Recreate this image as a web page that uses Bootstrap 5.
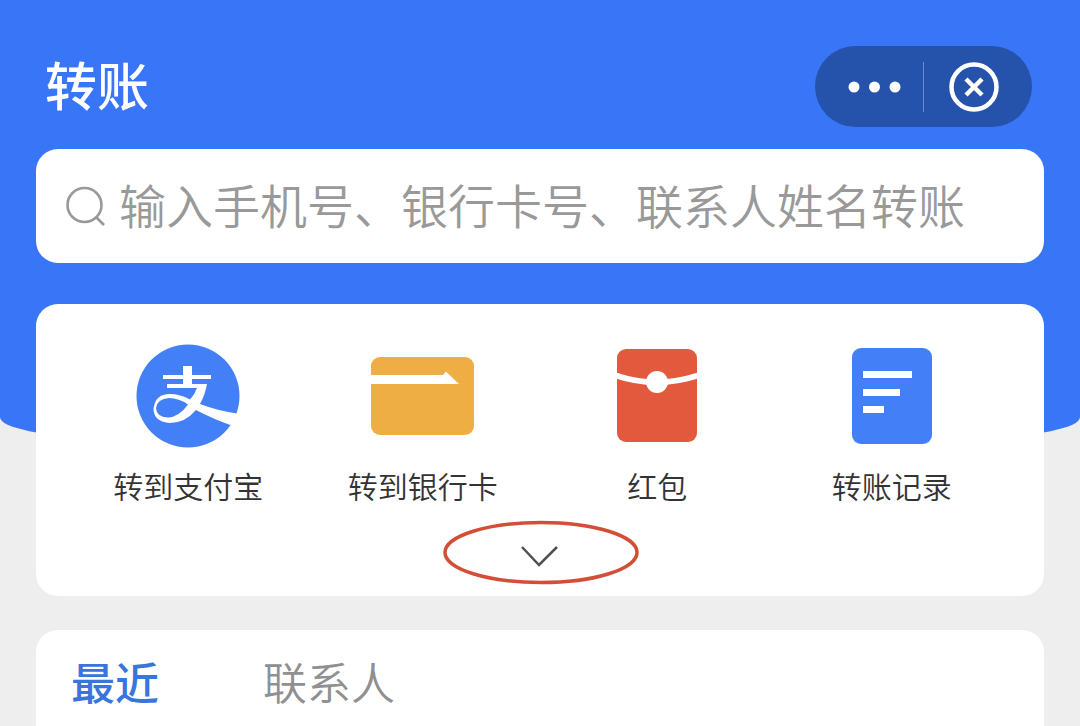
<!DOCTYPE html>
<html lang="zh-CN">
<head>
<meta charset="utf-8">
<meta name="viewport" content="width=device-width, initial-scale=1">
<title>转账</title>
<link href="https://cdn.jsdelivr.net/npm/bootstrap@5.3.0/dist/css/bootstrap.min.css" rel="stylesheet">
<style>
  body { background: #eee; font-family: "Noto Sans CJK SC", sans-serif; }
  .hero { background: #3875f7; padding: 46px 36px 174px; border-radius: 0 0 100px 100px / 0 0 20px 20px; }
  .page-title { font-size: 52px; line-height: 76px; font-weight: 500; padding-left: 9px; }
  .capsule { background: #2552ab; height: 81px; width: 217px; margin-right: 12px; }
  .capsule .btn { border: 0; padding: 0; flex: 1 1 0; }
  .capsule .btn svg { display: block; margin: 0 auto; }
  .capsule-rule { width: 1px; height: 50px; background: #6b8cd0; }
  .search-box { height: 114px; margin-top: 22px; border-radius: 22px; padding: 0 28px; gap: 11px; }
  .search-box input { font-size: 47px; line-height: 70px; font-weight: 350; color: #333; padding: 0 0 4px; background: none; }
  .search-box input::placeholder { color: #999; opacity: 1; }
  .panel { border-radius: 22px; margin: 0 36px; }
  .actions { margin-top: -133px; padding: 40px 35px 10px; }
  .action-link { color: #333; font-size: 30px; line-height: 44px; gap: 15px; font-weight: 350; }
  .expand { border: 0; padding: 0; margin-top: 13px; }
  .expand svg { display: block; }
  .tab-panel { margin-top: 34px; border-radius: 22px 22px 0 0; padding: 19px 35px 0; gap: 104px; }
  .tab-panel .btn { border: 0; padding: 0; font-size: 44px; line-height: 64px; font-weight: 350; color: #909090; }
  .tab-panel .btn.active { font-weight: 500; color: #3c74de; }
</style>
</head>
<body class="d-flex flex-column min-vh-100">
<header class="hero">
  <div class="d-flex justify-content-between align-items-start">
    <h1 class="page-title text-white m-0">转账</h1>
    <div class="capsule rounded-pill d-flex align-items-center">
      <button type="button" class="btn" aria-label="更多">
        <svg width="70" height="52" viewBox="0 0 70 52" fill="#fff"><circle cx="20" cy="26" r="5.500"/><circle cx="40.500" cy="26" r="5.500"/><circle cx="61" cy="26" r="5.500"/></svg>
      </button>
      <span class="capsule-rule"></span>
      <button type="button" class="btn" aria-label="关闭">
        <svg width="60" height="52" viewBox="0 0 60 52" fill="none" stroke="#fff"><circle cx="26" cy="26" r="22.500" stroke-width="4.500"/><path d="M18 18 34 34M34 18 18 34" stroke-width="4.500"/></svg>
      </button>
    </div>
  </div>
  <div class="search-box bg-white d-flex align-items-center">
    <label for="payee" class="flex-shrink-0 d-flex" aria-label="搜索">
      <svg width="44" height="44" viewBox="0 0 44 44" fill="none" stroke="#999" stroke-width="2.600"><circle cx="20.500" cy="21" r="17"/><path d="M32 33 40 41"/></svg>
    </label>
    <input id="payee" type="text" class="form-control border-0 shadow-none" placeholder="输入手机号、银行卡号、联系人姓名转账">
  </div>
</header>
<main class="d-flex flex-column flex-grow-1">
  <section class="panel actions bg-white">
    <nav class="row g-0">
      <div class="col-3"><a href="#" class="action-link d-flex flex-column align-items-center text-decoration-none">
        <svg width="104" height="104" viewBox="0 0 104 104"><circle cx="52" cy="52" r="51.500" fill="#437ff6"/><path d="M47 22H56V31H75V35H56V40H71Q69 51 64 60 82 67 104 70L97 82Q77 75 60 66 49 79 34 79 18 78 17.500 65 19 50 34 50 44 50 54 55.500 59 50 61 44H31V40H47V35H27V31H47ZM52 60.500Q43 54 33 54 21 55 20 64 20.500 73 32 73.500 43 73 52 60.500Z" fill="#fff" fill-rule="evenodd"/></svg>
        <span>转到支付宝</span></a></div>
      <div class="col-3"><a href="#" class="action-link d-flex flex-column align-items-center text-decoration-none">
        <svg width="104" height="104" viewBox="0 0 104 104"><rect x="0" y="13" width="103" height="78" rx="9" fill="#efae43"/><path d="M0 31H72L75 27.500 88 40H0z" fill="#fff"/></svg>
        <span>转到银行卡</span></a></div>
      <div class="col-3"><a href="#" class="action-link d-flex flex-column align-items-center text-decoration-none">
        <svg width="104" height="104" viewBox="0 0 104 104"><rect x="12" y="5" width="80" height="93" rx="9" fill="#e3593e"/><path d="M11 31.500Q51 45 93 31.500" fill="none" stroke="#fff" stroke-width="6"/><circle cx="52" cy="38" r="11" fill="#fff"/></svg>
        <span>红包</span></a></div>
      <div class="col-3"><a href="#" class="action-link d-flex flex-column align-items-center text-decoration-none">
        <svg width="104" height="104" viewBox="0 0 104 104"><rect x="12" y="4" width="80" height="96" rx="9" fill="#437ff6"/><path d="M23 27h49v7H23zM23 45h37v7H23zM23 62h21v7H23z" fill="#fff"/></svg>
        <span>转账记录</span></a></div>
    </nav>
    <button type="button" class="btn expand d-block mx-auto" aria-label="展开">
      <svg width="200" height="66" viewBox="0 0 200 66" fill="none"><ellipse cx="101" cy="32.500" rx="96" ry="30" stroke="#d34e36" stroke-width="3.500"/><path d="M82 27 99 45 117 27" stroke="#505050" stroke-width="2.500"/></svg>
    </button>
  </section>
  <section class="panel tab-panel bg-white d-flex align-items-start flex-grow-1" role="tablist">
    <button type="button" class="btn active" role="tab" aria-selected="true">最近</button>
    <button type="button" class="btn" role="tab" aria-selected="false">联系人</button>
  </section>
</main>
<script src="https://cdn.jsdelivr.net/npm/bootstrap@5.3.0/dist/js/bootstrap.bundle.min.js"></script>
</body>
</html>
